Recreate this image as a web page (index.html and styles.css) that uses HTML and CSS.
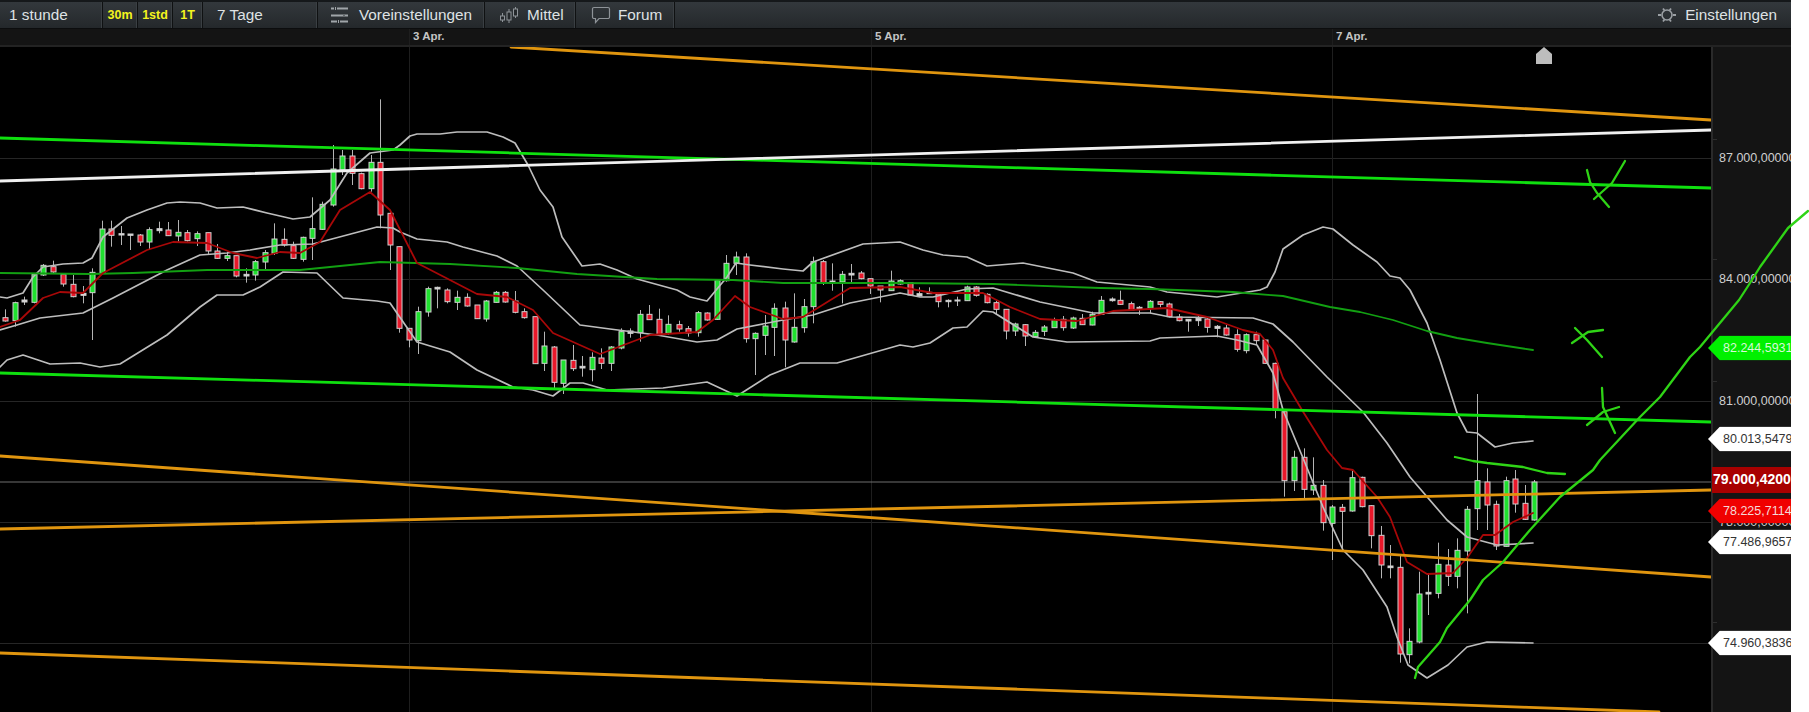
FILE: index.html
```html
<!DOCTYPE html>
<html lang="de">
<head>
    <meta charset="UTF-8">
    <title>Chart</title>
    <link rel="stylesheet" href="styles.css">
</head>
<body>

    <div class="terminal">
        <!-- Werkzeugleiste -->
        <div class="toolbar">
            <div class="tool tool-interval">1 stunde</div>
            <div class="tool tool-quick">30m</div>
            <div class="tool tool-quick">1std</div>
            <div class="tool tool-quick tool-quick-last">1T</div>
            <div class="tool tool-range">7 Tage</div>
            <div class="tool tool-presets">
                <svg class="icon" width="20" height="18" viewBox="0 0 20 18">
                    <path d="M1 2.500h3M7 2.500h11M1 9.500h12M15 9.500h3M1 15.500h6M10 15.500h8" stroke="#a0a5a9" stroke-width="2" fill="none"/>
                    <path d="M5.500 1v3M14 8v3M8.500 14v3" stroke="#a0a5a9" stroke-width="1" fill="none"/>
                </svg>
                Voreinstellungen
            </div>
            <div class="tool tool-style">
                <svg class="icon" width="20" height="18" viewBox="0 0 20 18">
                    <path d="M3.500 7v9M10 3v14M16.500 1v11" stroke="#8e9398" stroke-width="1" fill="none"/>
                    <rect x="1.500" y="10" width="4" height="4" fill="#24282b" stroke="#8e9398"/>
                    <rect x="8" y="6" width="4" height="8" fill="#24282b" stroke="#8e9398"/>
                    <rect x="14.500" y="3" width="4" height="7" fill="#24282b" stroke="#8e9398"/>
                </svg>
                Mittel
            </div>
            <div class="tool tool-forum">
                <svg class="icon" width="20" height="18" viewBox="0 0 20 18">
                    <path d="M3 1.500h14a1.500 1.500 0 0 1 1.500 1.500v8a1.500 1.500 0 0 1-1.500 1.500H8l-3.500 4v-4H3A1.500 1.500 0 0 1 1.500 11V3A1.500 1.500 0 0 1 3 1.500z" stroke="#8e9398" stroke-width="1.200" fill="none"/>
                </svg>
                Forum
            </div>
            <div class="toolbar-spacer"></div>
            <div class="tool-settings">
                <svg class="icon" width="18" height="18" viewBox="0 0 18 18">
                    <circle cx="9" cy="9" r="5" stroke="#9a9fa3" stroke-width="1.600" fill="none"/>
                    <path d="M0 9h3M15 9h3M5 2.500l1.500 2M13 2.500l-1.500 2M5 15.500l1.500-2M13 15.500l-1.500-2" stroke="#9a9fa3" stroke-width="1.800" fill="none"/>
                </svg>
                Einstellungen
            </div>
        </div>

        <!-- Zeitachse -->
        <div class="datebar">
            <span class="date" style="left:409px">3 Apr.</span>
            <span class="date" style="left:871px">5 Apr.</span>
            <span class="date" style="left:1332px">7 Apr.</span>
        </div>

        <div class="stage">
            <div class="plot">
                <svg id="chart" width="1711" height="665" viewBox="0 47 1711 665"></svg>
                <svg class="home-marker" width="16" height="17" viewBox="0 0 16 17">
                    <path d="M8 0l8 7v10H0V7z" fill="#bdbdbd"/>
                </svg>
            </div>

            <!-- Preisachse -->
            <div class="axis">
                <i class="tick" style="top:92px"></i>
                <i class="tick" style="top:212px"></i>
                <i class="tick" style="top:334px"></i>
                <i class="tick" style="top:575px"></i>
                <span class="price" style="top:111px">87.000,00000</span>
                <span class="price" style="top:232px">84.000,00000</span>
                <span class="price" style="top:354px">81.000,00000</span>
                <span class="price" style="top:475px">78.000,00000</span>
                <span class="tag tag-green" style="top:301px">82.244,59310</span>
                <span class="tag tag-white" style="top:392px">80.013,54790</span>
                <span class="tag-last" style="top:433px">79.000,42000</span>
                <span class="tag tag-red" style="top:464px">78.225,71140</span>
                <span class="tag tag-white" style="top:495px">77.486,96570</span>
                <span class="tag tag-white" style="top:596px">74.960,38360</span>
            </div>
        </div>
    </div>

    <!-- Von Hand gezeichnet, liegt ueber allem -->
    <svg id="drawing" class="drawing" width="1809" height="712" viewBox="0 0 1809 712"></svg>

    <script src="chart.js"></script>
</body>
</html>
```

FILE: styles.css
```css
* {
    box-sizing: border-box;
}

html, body {
    margin: 0;
    height: 712px;
    overflow: hidden;
    background-color: #fff;
    font-family: "Liberation Sans", Arial, sans-serif;
}

.terminal {
    width: 1791px;
    height: 712px;
    display: flex;
    flex-direction: column;
    background-color: #000;
}

/* Werkzeugleiste */
.toolbar {
    height: 29px;
    display: flex;
    align-items: stretch;
    background: linear-gradient(#33383c, #24282b);
    border-top: 2px solid #15181a;
    border-bottom: 1px solid #0c0d0e;
    color: #dfe2e4;
    font-size: 15.300px;
    flex: none;
}

.tool {
    display: flex;
    align-items: center;
    border-right: 1px solid #0f1112;
    box-shadow: inset -1px 0 0 #3a3f43;
    white-space: nowrap;
}

.tool .icon {
    margin-right: 9px;
}

.tool-interval {
    width: 103px;
    padding-left: 9px;
}

.tool-quick {
    width: 35px;
    justify-content: center;
    color: #f4f41e;
    font-size: 12.500px;
    font-weight: bold;
}

.tool-quick-last {
    width: 30px;
}

.tool-range {
    width: 115px;
    padding-left: 14px;
}

.tool-presets {
    width: 167px;
    padding-left: 12px;
}

.tool-style {
    width: 91px;
    padding-left: 14px;
}

.tool-style .icon {
    margin-right: 8px;
}

.tool-forum {
    width: 99px;
    padding-left: 15px;
}

.tool-forum .icon {
    margin-right: 7px;
}

.toolbar-spacer {
    flex: 1;
}

.tool-settings {
    display: flex;
    align-items: center;
    padding-right: 14px;
}

.tool-settings .icon {
    margin-right: 9px;
}

/* Zeitachse */
.datebar {
    height: 18px;
    position: relative;
    background-color: #141414;
    border-bottom: 2px solid #232323;
    flex: none;
}

.date {
    position: absolute;
    top: 0;
    height: 16px;
    padding-left: 3px;
    border-left: 1px solid #1e1e1e;
    color: #c4c4c4;
    font-size: 11.500px;
    font-weight: bold;
    line-height: 15px;
}

.stage {
    flex: 1;
    display: flex;
    min-height: 0;
}

.plot {
    width: 1711px;
    position: relative;
    overflow: hidden;
}

#chart {
    display: block;
    filter: blur(0.35px);
}

.home-marker {
    position: absolute;
    left: 1536px;
    top: 0;
}

/* Preisachse */
.axis {
    flex: 1;
    position: relative;
    background-color: #141414;
    border-left: 2px solid #2a2a2a;
}

.tick {
    position: absolute;
    left: 0;
    width: 4px;
    height: 1px;
    background-color: #2e2e2e;
}

.price {
    position: absolute;
    left: 6px;
    width: 72px;
    transform: translateY(-50%);
    color: #cfcfcf;
    font-size: 12.500px;
    white-space: nowrap;
    overflow: hidden;
}

.tag {
    position: absolute;
    left: -5px;
    width: 83px;
    height: 25px;
    padding-left: 15px;
    transform: translateY(-50%);
    clip-path: polygon(0 50%, 12px 0, 100% 0, 100% 100%, 12px 100%);
    font-size: 12.500px;
    line-height: 25px;
    white-space: nowrap;
    overflow: hidden;
}

.tag-white {
    background-color: #fff;
    color: #333;
}

.tag-green {
    background-color: #00f000;
    color: #d8f8d8;
}

.tag-red {
    background-color: #f00000;
    color: #f5d8d8;
}

.tag-last {
    position: absolute;
    left: -1px;
    width: 79px;
    height: 26px;
    padding-left: 1px;
    transform: translateY(-50%);
    background-color: #a80000;
    color: #fff;
    font-size: 14px;
    font-weight: bold;
    line-height: 25px;
    white-space: nowrap;
    overflow: hidden;
}

/* Handzeichnung */
.drawing {
    position: absolute;
    left: 0;
    top: 0;
    pointer-events: none;
    filter: blur(0.3px);
}
```

FILE: chart.js
```js
const SVG_NS = 'http://www.w3.org/2000/svg';
const chart = document.getElementById('chart');
const drawing = document.getElementById('drawing');

const COLORS = { g: '#1fe02f', r: '#e8182a', d: '#d8d8d8' };

function add(parent, tag, attrs) {
    const el = document.createElementNS(SVG_NS, tag);
    Object.keys(attrs).forEach(k => el.setAttribute(k, attrs[k]));
    parent.appendChild(el);
    return el;
}

function line(parent, pts, color, width) {
    add(parent, 'polyline', {
        points: pts.map(p => p.join(',')).join(' '),
        fill: 'none',
        stroke: color,
        'stroke-width': width,
        'stroke-linejoin': 'round',
        'stroke-linecap': 'round'
    });
}

// Gitter
[158, 279, 401, 522, 643].forEach(y => line(chart, [[0, y + 0.5], [1711, y + 0.5]], '#262626', 1));
[409, 871, 1332].forEach(x => line(chart, [[x + 0.5, 47], [x + 0.5, 712]], '#1e1e1e', 1));
line(chart, [[0, 482], [1711, 482]], '#6e6e6e', 1);

// Kerzen: x, Koerper oben, Koerper unten, Docht oben, Docht unten, Farbe.
// Werte in 1/3 px, relativ zum Ursprung des Abschnitts
const sections = [
    [0, 90, [
        [14,683,693,658,695,'r'],[44,638,692,635,710,'g'],[72,630,636,620,645,'d'],[102,553,637,550,640,'g'],
        [130,526,555,522,558,'g'],[160,530,546,512,550,'r'],[190,553,582,550,590,'r'],[218,583,620,555,622,'r'],
        [248,610,616,588,640,'d'],[275,547,608,535,750,'g'],[306,417,550,392,552,'g'],[333,417,436,392,470,'r'],
        [362,431,435,408,465,'d'],[390,432,436,432,480,'d'],[420,435,456,432,468,'r'],[447,419,456,412,478,'g'],
        [477,416,422,395,430,'d'],[505,420,437,396,438,'r'],[535,427,438,390,455,'g'],[562,428,452,420,455,'r'],
        [592,431,446,424,468,'g'],[623,428,483,428,492,'r'],[651,483,505,462,507,'r'],[681,497,505,485,513,'g'],
        [708,497,558,497,562,'r'],[737,553,558,535,578,'d'],[766,515,555,510,572,'g'],[796,488,516,480,540,'g'],
        [822,447,490,400,495,'g'],[852,448,465,415,470,'r'],[880,467,505,455,507,'r'],[910,442,508,440,515,'g'],
        [937,416,445,322,510,'g'],[967,343,418,335,420,'g'],[998,237,345,165,350,'g'],[1025,198,240,180,255,'g'],
        [1055,198,250,180,285,'r'],[1083,251,296,248,298,'r'],[1113,217,296,195,305,'g'],[1140,217,375,28,415,'r'],
        [1171,370,465,365,540,'r'],[1198,470,715,470,728,'r'],[1228,715,750,715,772,'r'],[1255,665,752,650,792,'g'],
        [1285,596,666,590,680,'g'],[1312,592,597,590,655,'d'],[1342,600,635,595,640,'r']
    ]],
    [450, 220, [
        [20,232,247,212,270,'g'],[50,232,258,220,260,'r'],[81,255,296,255,296,'r'],[108,243,297,240,305,'g'],
        [139,217,247,213,248,'g'],[166,217,246,213,248,'r'],[196,243,277,213,280,'r'],[223,275,293,265,296,'r'],
        [254,290,431,290,432,'r'],[281,378,430,335,453,'g'],[311,381,487,378,505,'r'],[338,420,490,420,522,'g'],
        [368,421,446,375,453,'r'],[395,439,444,408,470,'d'],[426,412,449,397,484,'g'],[453,414,430,385,447,'r'],
        [483,381,430,378,453,'g'],[514,335,384,325,388,'g'],[541,333,340,325,353,'d'],[571,283,338,270,365,'g'],
        [598,283,299,255,300,'r'],[628,298,344,266,345,'r'],[655,313,340,286,345,'g'],[686,314,327,302,335,'r'],
        [713,326,339,318,350,'r'],[744,278,338,273,350,'g'],[771,279,300,277,302,'r'],[802,181,298,180,300,'g'],
        [828,130,182,105,185,'g'],[858,111,130,95,165,'g'],[889,111,356,100,368,'r'],[916,340,356,337,465,'g'],
        [946,318,346,285,405,'g'],[973,265,322,250,408,'g'],[1004,264,360,245,442,'r'],[1031,322,366,220,368,'g'],
        [1061,260,323,237,338,'g'],[1089,125,260,110,310,'g'],[1119,125,188,120,195,'r'],[1146,183,188,130,212,'d'],
        [1176,163,186,153,250,'g'],[1203,160,165,132,190,'d'],[1234,159,176,153,178,'r'],[1261,176,198,176,222,'r'],
        [1291,198,210,198,247,'r'],[1322,183,212,152,213,'g']
    ]],
    [900, 250, [
        [0,92,102,88,104,'g'],[30,98,135,98,137,'r'],[56,131,138,112,140,'d'],[87,127,131,112,132,'d'],
        [114,132,155,128,172,'r'],[143,151,155,148,172,'d'],[171,150,153,140,168,'d'],[202,111,152,107,153,'g'],
        [229,111,136,108,140,'r'],[260,133,158,130,160,'r'],[287,158,178,152,192,'r'],[317,178,243,178,268,'r'],
        [344,222,243,218,258,'g'],[374,224,258,222,288,'r'],[405,247,260,240,263,'g'],[432,231,244,225,258,'g'],
        [462,209,233,203,233,'g'],[489,208,233,198,242,'r'],[520,204,234,200,237,'g'],[547,205,224,192,225,'r'],
        [577,193,225,185,226,'g'],[604,151,193,138,195,'g'],[635,147,152,142,155,'d'],[661,151,163,122,164,'r'],
        [692,161,180,155,180,'r'],[718,172,178,168,195,'d'],[749,154,175,150,190,'g'],[779,155,163,153,172,'r'],
        [807,162,200,158,202,'r'],[837,201,212,192,214,'r'],[864,208,213,208,245,'d'],[895,205,212,198,228,'d'],
        [922,207,232,205,248,'r'],[952,229,235,225,262,'d'],[979,234,255,225,257,'r'],[1010,254,298,238,305,'r'],
        [1037,254,302,250,310,'g'],[1067,254,272,245,285,'r'],[1095,270,340,268,342,'r'],[1125,340,480,338,505,'r']
    ]],
    [1240, 380, [
        [132,95,302,90,350,'r'],[162,232,302,212,333,'g'],[192,232,328,205,355,'r'],[220,316,330,232,345,'g'],
        [250,316,428,300,452,'r'],[277,381,430,375,540,'g'],[307,382,394,372,505,'r'],[335,293,393,272,395,'g'],
        [365,292,380,290,382,'r'],[392,377,467,375,505,'r'],[423,466,555,438,595,'r'],[449,558,563,495,595,'d'],
        [480,562,822,525,848,'r'],[507,784,824,745,850,'g'],[537,642,786,575,790,'g'],[564,637,642,580,705,'d'],
        [595,553,640,488,655,'g'],[625,555,589,507,618,'r'],[652,511,589,475,625,'g'],[682,388,513,378,700,'g'],
        [710,302,386,42,450,'g'],[740,306,375,265,450,'r'],[767,373,498,362,510,'r'],[797,302,499,290,500,'g'],
        [825,297,372,270,398,'r'],[855,370,418,315,420,'r'],[882,306,420,300,422,'g']
    ]]
];

sections.forEach(([x0, y0, rows]) => {
    rows.forEach(([cx, top, bottom, wickTop, wickBottom, kind]) => {
        const x = Math.round(x0 + cx / 3) + 0.5;
        add(chart, 'line', {
            x1: x, x2: x, y1: y0 + wickTop / 3, y2: y0 + wickBottom / 3,
            stroke: '#b4b4b4', 'stroke-width': 1
        });
        add(chart, 'rect', {
            x: x - 2.5, y: y0 + top / 3, width: 5, height: Math.max((bottom - top) / 3, 1),
            fill: COLORS[kind], stroke: '#cfcfcf', 'stroke-width': 1
        });
    });
});

// Bollinger
const upper = [[0,297],[7,298],[23,293],[33,277],[43,267],[63,264],[83,263],[92,258],[103,237],[127,218],[147,210],[167,203],[180,202],[200,203],[217,208],[243,207],[267,213],[293,219],[310,217],[330,200],[347,173],[370,153],[393,150],[400,145],[410,136],[417,134],[440,134],[457,132],[487,132],[503,137],[515,143],[528,165],[540,190],[553,207],[562,237],[582,266],[600,264],[617,270],[637,279],[677,290],[690,297],[707,301],[727,277],[736,263],[750,265],[783,269],[803,271],[813,262],[863,244],[900,242],[923,250],[943,255],[967,257],[987,266],[1023,263],[1073,273],[1097,282],[1150,287],[1167,292],[1217,297],[1260,290],[1267,287],[1275,272],[1283,249],[1303,235],[1323,227],[1333,229],[1343,237],[1353,245],[1377,262],[1390,276],[1400,278],[1410,290],[1427,323],[1440,360],[1457,413],[1467,432],[1477,433],[1495,447],[1513,443],[1533,441]];
const middle = [[0,330],[17,325],[40,318],[83,313],[113,298],[167,270],[200,255],[227,253],[250,250],[280,245],[313,244],[347,235],[377,227],[393,228],[400,232],[417,239],[447,242],[463,247],[497,256],[517,266],[543,290],[580,325],[610,329],[657,335],[697,342],[717,340],[737,329],[783,320],[813,315],[850,303],[900,293],[920,297],[933,297],[967,289],[993,288],[1040,302],[1093,313],[1150,313],[1170,317],[1253,318],[1273,324],[1293,342],[1327,377],[1363,412],[1387,443],[1410,477],[1447,520],[1467,537],[1497,545],[1533,543]];
const lower = [[0,367],[7,360],[23,355],[50,364],[80,363],[100,367],[120,364],[167,335],[200,307],[217,295],[243,295],[260,287],[283,272],[317,273],[343,298],[377,301],[390,303],[417,342],[450,352],[477,370],[513,387],[533,390],[553,396],[570,383],[583,383],[607,390],[663,388],[707,382],[737,396],[770,375],[800,363],[837,363],[900,345],[913,347],[930,343],[953,328],[967,327],[983,311],[993,312],[1033,337],[1067,342],[1150,341],[1160,338],[1217,336],[1237,340],[1257,345],[1273,373],[1283,410],[1303,458],[1323,507],[1343,550],[1363,570],[1387,607],[1397,637],[1408,665],[1427,678],[1448,665],[1467,647],[1487,642],[1533,643]];
[upper, middle, lower].forEach(pts => line(chart, pts, '#bdbdbd', 1.7));

// Gleitende Durchschnitte
line(chart, [[0,273],[90,274],[133,273],[207,270],[300,270],[380,262],[450,264],[517,268],[577,274],[657,279],[733,280],[783,283],[900,283],[993,284],[1100,288],[1150,289],[1233,292],[1283,296],[1330,307],[1360,312],[1393,320],[1427,331],[1457,338],[1487,343],[1533,350]], '#12a012', 1.8);
line(chart, [[0,327],[20,320],[43,298],[60,292],[83,293],[103,273],[147,250],[173,242],[207,243],[233,253],[257,258],[280,252],[300,253],[320,242],[340,210],[370,192],[390,210],[417,263],[450,280],[477,294],[507,297],[533,310],[553,333],[600,354],[650,335],[697,332],[713,320],[735,296],[750,307],[783,319],[803,317],[850,288],[900,287],[933,293],[983,293],[1010,307],[1040,319],[1077,321],[1113,311],[1167,308],[1207,317],[1243,330],[1260,334],[1273,350],[1283,378],[1302,410],[1327,450],[1342,468],[1353,470],[1377,497],[1390,517],[1407,562],[1427,574],[1453,573],[1467,558],[1483,535],[1495,535],[1513,522],[1533,513]], '#a80808', 1.8);

// Trendlinien
const ORANGE = '#e0950f';
const GREEN = '#0fe00f';
line(chart, [[511,47],[1711,120]], ORANGE, 2.8);
line(chart, [[0,456],[1711,577]], ORANGE, 2.8);
line(chart, [[0,529],[1711,490]], ORANGE, 2.8);
line(chart, [[0,653],[1659,712]], ORANGE, 2.8);
line(chart, [[0,138],[1711,188]], GREEN, 2.8);
line(chart, [[0,373],[1711,422]], GREEN, 2.8);
line(chart, [[0,181],[1711,130]], '#f0f0f0', 2.8);

// Handzeichnung
const PEN = '#2fd416';
[
    [[1415,678],[1418,667],[1440,642],[1447,628],[1470,600],[1483,580],[1503,562],[1530,530],[1560,497],[1593,470],[1600,460],[1640,417],[1660,397],[1690,357],[1700,347],[1739,300],[1750,283],[1760,267],[1788,228],[1808,211]],
    [[1455,457],[1473,461],[1487,463],[1523,467],[1547,473],[1565,474]],
    [[1587,170],[1590,182],[1597,193],[1609,207]],
    [[1625,161],[1612,183],[1594,199]],
    [[1575,328],[1587,340],[1602,357]],
    [[1572,343],[1588,332],[1603,330]],
    [[1602,388],[1603,407],[1615,433]],
    [[1587,425],[1603,412],[1619,407]]
].forEach(pts => line(drawing, pts, PEN, 2.3));
```
